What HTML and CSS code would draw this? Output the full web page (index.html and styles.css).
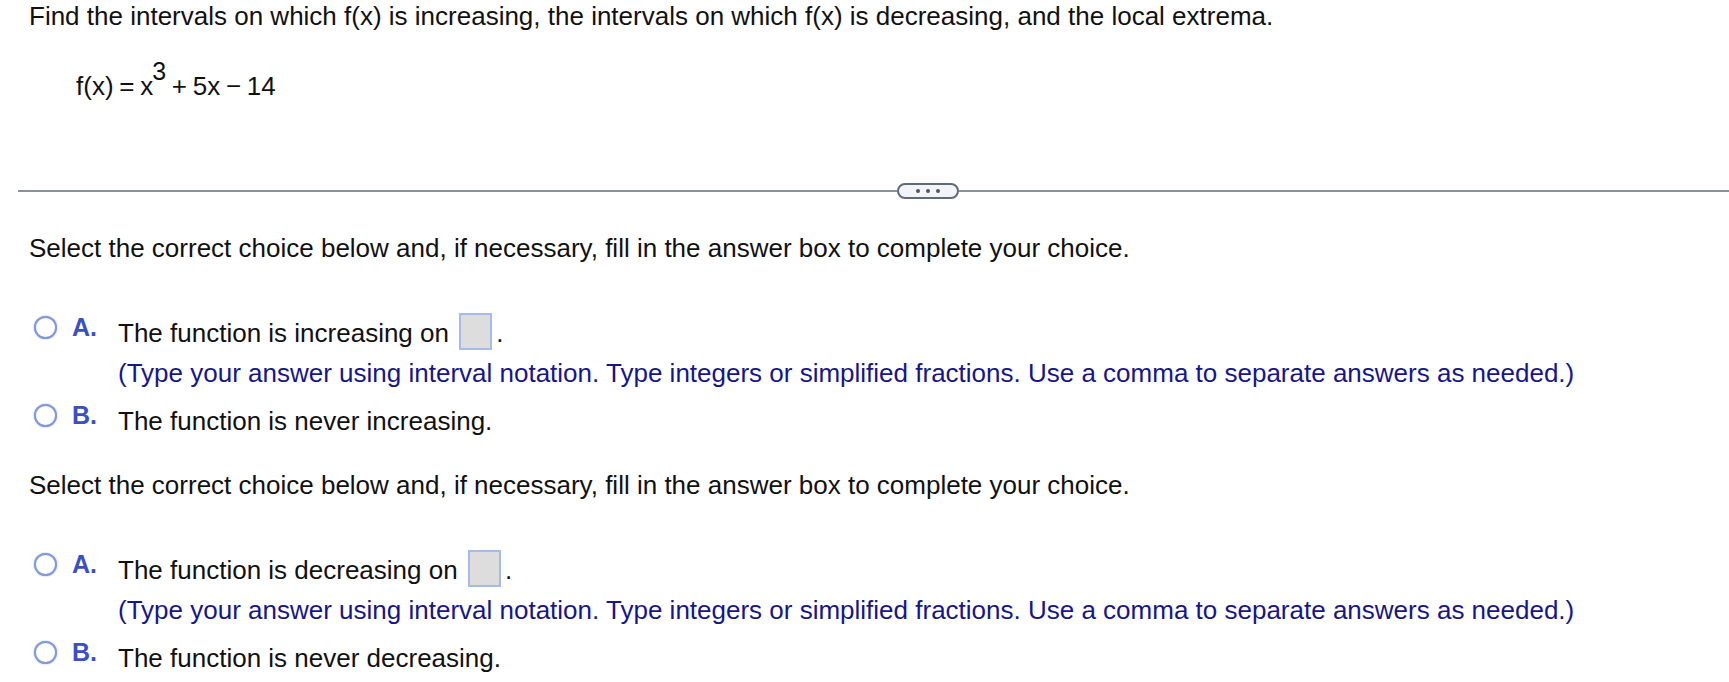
FILE: index.html
```html
<!DOCTYPE html>
<html lang="en">
<head>
<meta charset="utf-8">
<title>Increasing and decreasing intervals</title>
<link rel="stylesheet" href="styles.css">
</head>
<body>
<div class="page">
  <p class="prompt">Find the intervals on which f(x) is increasing, the intervals on which f(x) is decreasing, and the local extrema.</p>
  <p class="formula">f(x) = x<sup>3</sup> + 5x − 14</p>

  <div class="divider"><span class="pill"><i></i><i></i><i></i></span></div>

  <section class="part part-first">
    <p class="instr">Select the correct choice below and, if necessary, fill in the answer box to complete your choice.</p>
    <div class="options">
      <div class="option">
        <span class="radio"></span>
        <span class="label">A.</span>
        <div class="body">
          <p class="main">The function is increasing on <span class="box"></span>.</p>
          <p class="hint">(Type your answer using interval notation. Type integers or simplified fractions. Use a comma to separate answers as needed.)</p>
        </div>
      </div>
      <div class="option">
        <span class="radio"></span>
        <span class="label">B.</span>
        <div class="body">
          <p class="main">The function is never increasing.</p>
        </div>
      </div>
    </div>
  </section>

  <section class="part part-second">
    <p class="instr">Select the correct choice below and, if necessary, fill in the answer box to complete your choice.</p>
    <div class="options">
      <div class="option">
        <span class="radio"></span>
        <span class="label">A.</span>
        <div class="body">
          <p class="main">The function is decreasing on <span class="box"></span>.</p>
          <p class="hint">(Type your answer using interval notation. Type integers or simplified fractions. Use a comma to separate answers as needed.)</p>
        </div>
      </div>
      <div class="option">
        <span class="radio"></span>
        <span class="label">B.</span>
        <div class="body">
          <p class="main">The function is never decreasing.</p>
        </div>
      </div>
    </div>
  </section>
</div>
</body>
</html>
```
FILE: styles.css
```css
html, body {
  margin: 0;
  padding: 0;
  background: #ffffff;
}

body {
  font-family: "Liberation Sans", Arial, sans-serif;
  font-size: 26px;
  color: #111111;
  overflow: hidden;
}

.page {
  padding: 1px 0 0 29px;
}

p {
  margin: 0;
}

.prompt {
  line-height: 30px;
  white-space: nowrap;
}

.formula {
  margin: 37px 0 0 47px;
  line-height: 36px;
  word-spacing: -1.5px;
  white-space: nowrap;
}

.formula sup {
  font-size: 25px;
  line-height: 0;
  vertical-align: 15px;
  margin-left: -1px;
}

.divider {
  margin: 79px 0 0 -11px;
  height: 16px;
  display: flex;
  align-items: center;
}

.divider::before,
.divider::after {
  content: "";
  height: 2px;
  background: #8792a0;
}

.divider::before {
  width: 879px;
  flex: none;
}

.divider::after {
  flex: 1;
}

.pill {
  box-sizing: border-box;
  width: 62px;
  height: 16px;
  border: 2px solid #5d6b7a;
  border-radius: 8px;
  background: #f2f4f7;
  display: flex;
  align-items: center;
  justify-content: center;
  gap: 6px;
}

.pill i {
  width: 4px;
  height: 4px;
  border-radius: 50%;
  background: #4f5861;
}

.instr {
  line-height: 30px;
  white-space: nowrap;
}

.part-first .instr {
  margin-top: 34px;
}

.part-second .instr {
  margin-top: 29px;
}

.options {
  margin-top: 50px;
  display: flex;
  flex-direction: column;
  gap: 8px;
}

.option {
  display: flex;
  align-items: flex-start;
}

.radio {
  box-sizing: border-box;
  flex: none;
  width: 23px;
  height: 23px;
  margin: 3px 15px 0 5px;
  border: 2px solid #8299de;
  border-radius: 50%;
  background: #ffffff;
  box-shadow: 0 0 1.5px rgba(110, 135, 215, 0.8);
}

.label {
  flex: none;
  width: 46px;
  font-size: 25px;
  font-weight: bold;
  line-height: 28px;
  color: #3a4fc4;
}

.body p {
  line-height: 40px;
  white-space: nowrap;
}

.hint {
  color: #16168c;
}

.box {
  display: inline-block;
  box-sizing: border-box;
  width: 33px;
  height: 37px;
  margin: 0 4px 0 3px;
  vertical-align: top;
  background: #dddddd;
  border: 2px solid #a6bbea;
}
```
